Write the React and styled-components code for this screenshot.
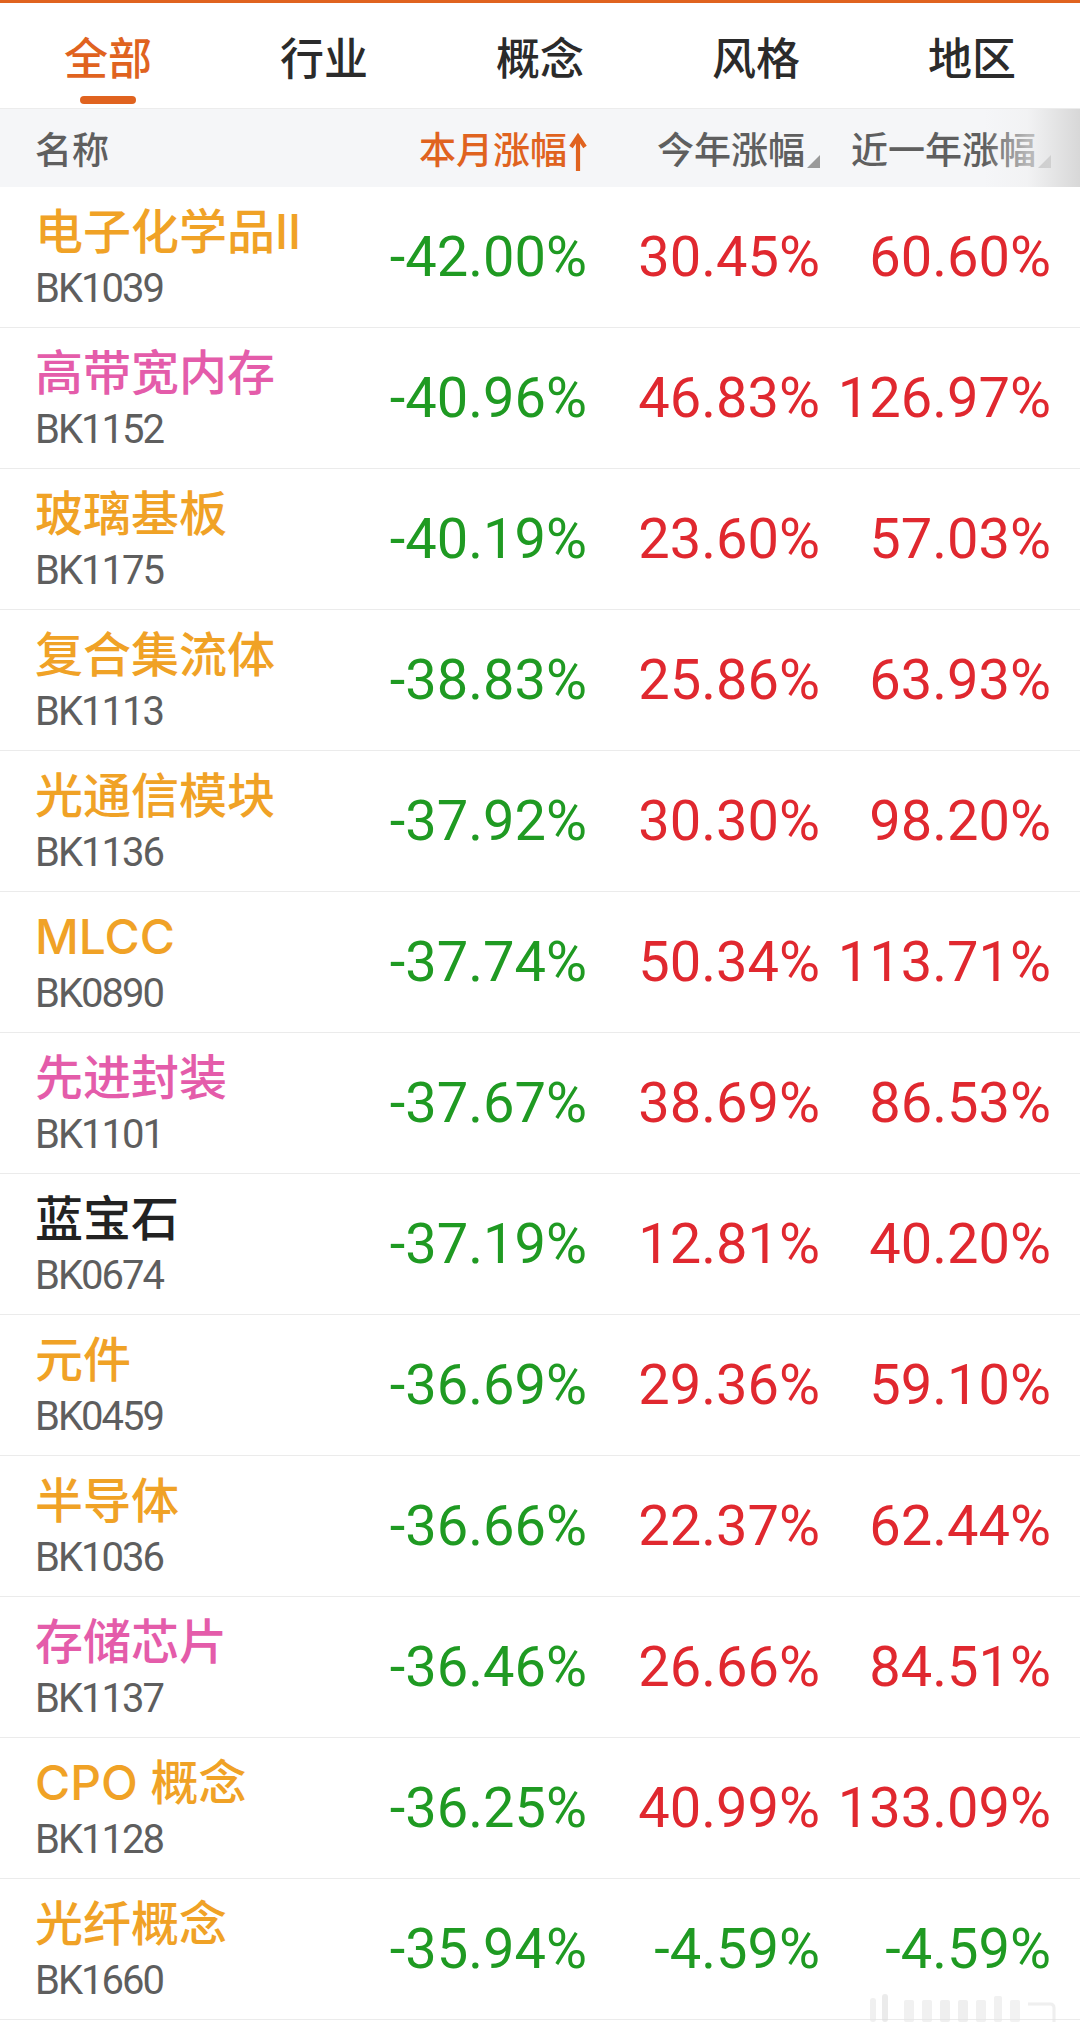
import React from 'react';
import styled, { createGlobalStyle } from 'styled-components';

const GlobalStyle = createGlobalStyle`
  body {
    margin: 0;
    background: #ffffff;
    font-family: "Noto Sans CJK SC", "Noto Sans", sans-serif;
  }
`;

const ORANGE = '#e0631f';
const GREEN = '#1f9a22';
const RED = '#e0282f';

const nameColors = {
  gold: '#f0a226',
  pink: '#e45caa',
  dark: '#222222',
};

const rows = [
  { name: '电子化学品II', code: 'BK1039', tone: 'gold', v: ['-42.00%', '30.45%', '60.60%'] },
  { name: '高带宽内存', code: 'BK1152', tone: 'pink', v: ['-40.96%', '46.83%', '126.97%'] },
  { name: '玻璃基板', code: 'BK1175', tone: 'gold', v: ['-40.19%', '23.60%', '57.03%'] },
  { name: '复合集流体', code: 'BK1113', tone: 'gold', v: ['-38.83%', '25.86%', '63.93%'] },
  { name: '光通信模块', code: 'BK1136', tone: 'gold', v: ['-37.92%', '30.30%', '98.20%'] },
  { name: 'MLCC', code: 'BK0890', tone: 'gold', v: ['-37.74%', '50.34%', '113.71%'] },
  { name: '先进封装', code: 'BK1101', tone: 'pink', v: ['-37.67%', '38.69%', '86.53%'] },
  { name: '蓝宝石', code: 'BK0674', tone: 'dark', v: ['-37.19%', '12.81%', '40.20%'] },
  { name: '元件', code: 'BK0459', tone: 'gold', v: ['-36.69%', '29.36%', '59.10%'] },
  { name: '半导体', code: 'BK1036', tone: 'gold', v: ['-36.66%', '22.37%', '62.44%'] },
  { name: '存储芯片', code: 'BK1137', tone: 'pink', v: ['-36.46%', '26.66%', '84.51%'] },
  { name: 'CPO 概念', code: 'BK1128', tone: 'gold', v: ['-36.25%', '40.99%', '133.09%'] },
  { name: '光纤概念', code: 'BK1660', tone: 'gold', v: ['-35.94%', '-4.59%', '-4.59%'] },
];

const tabs = ['全部', '行业', '概念', '风格', '地区'];

const Page = styled.div`
  position: relative;
  width: 1080px;
  min-height: 2036px;
  background: #fff;
`;

const TopLine = styled.div`
  height: 3px;
  background: ${ORANGE};
`;

const TabBar = styled.div`
  display: grid;
  grid-template-columns: repeat(5, 1fr);
  height: 105px;
`;

const Tab = styled.div`
  display: flex;
  flex-direction: column;
  align-items: center;
  padding-top: 27px;
`;

const TabLabel = styled.span`
  font-size: 44px;
  line-height: 52px;
  font-weight: 500;
  color: ${p => (p.$active ? ORANGE : '#2b2b2b')};
`;

const TabMark = styled.div`
  margin-top: 14px;
  width: 56px;
  height: 8px;
  border-radius: 4px;
  background: ${p => (p.$active ? ORANGE : 'transparent')};
`;

const Columns = styled.div`
  display: grid;
  grid-template-columns: 1fr 207px 233px 231px;
  padding: 0 29px 0 35px;
`;

const HeadRow = styled(Columns)`
  position: relative;
  height: 78px;
  align-items: center;
  background: #f5f6f8;
  border-top: 1px solid #ececec;

  &::after {
    content: '';
    position: absolute;
    top: 0;
    right: 0;
    width: 96px;
    height: 100%;
    background: linear-gradient(
      to right,
      rgba(245, 246, 248, 0) 0%,
      rgba(240, 240, 241, 0.6) 45%,
      rgba(214, 214, 214, 0.95) 100%
    );
  }
`;

const HeadCell = styled.div`
  display: flex;
  align-items: center;
  justify-content: ${p => (p.$left ? 'flex-start' : 'flex-end')};
  font-size: 37px;
  line-height: 44px;
  color: ${p => (p.$active ? ORANGE : '#5f5f5f')};
  font-weight: 500;
  white-space: nowrap;
`;

const Corner = styled.svg`
  width: 13px;
  height: 13px;
  margin-left: 2px;
  align-self: flex-end;
  margin-bottom: 2px;
  flex-shrink: 0;
`;

const Row = styled(Columns)`
  height: 140px;
  border-bottom: 1px solid #ebebeb;
  align-items: center;
`;

const NameCell = styled.div`
  display: flex;
  flex-direction: column;
  align-self: start;
  padding-top: 17px;
`;

const Name = styled.span`
  font-family: Inter, "Noto Sans CJK SC", sans-serif;
  font-size: 48px;
  line-height: 56px;
  font-weight: 500;
  color: ${p => nameColors[p.$tone]};
  white-space: nowrap;
`;

const Code = styled.span`
  margin-top: 6px;
  font-family: Roboto, "Noto Sans", sans-serif;
  font-size: 40px;
  line-height: 46px;
  letter-spacing: -2px;
  color: #5e5e5e;
`;

const Value = styled.span`
  text-align: right;
  white-space: nowrap;
  font-family: Roboto, "Noto Sans", sans-serif;
  font-size: 56px;
  line-height: 64px;
  color: ${p => (p.$down ? GREEN : RED)};
`;

const Watermark = styled.svg`
  position: absolute;
  right: 22px;
  bottom: 10px;
  width: 190px;
  height: 36px;
  opacity: 0.55;
`;

function SortArrow() {
  return (
    <svg width="18" height="40" viewBox="0 0 18 40" style={{ marginLeft: 2, marginTop: 10, flexShrink: 0 }}>
      <path d="M9 38 L9 5" stroke={ORANGE} strokeWidth="4.2" fill="none" />
      <path d="M2 14 L9 3.5 L16 14" stroke={ORANGE} strokeWidth="4.2" fill="none" strokeLinejoin="miter" />
    </svg>
  );
}

function SortCorner() {
  return (
    <Corner viewBox="0 0 13 13">
      <polygon points="13,0 13,13 0,13" fill="#9a9a9a" />
    </Corner>
  );
}

export default function App() {
  return (
    <Page>
      <GlobalStyle />
      <TopLine />
      <TabBar>
        {tabs.map((t, i) => (
          <Tab key={t}>
            <TabLabel $active={i === 0}>{t}</TabLabel>
            <TabMark $active={i === 0} />
          </Tab>
        ))}
      </TabBar>
      <HeadRow>
        <HeadCell $left>名称</HeadCell>
        <HeadCell $active>
          本月涨幅
          <SortArrow />
        </HeadCell>
        <HeadCell>
          今年涨幅
          <SortCorner />
        </HeadCell>
        <HeadCell>
          近一年涨幅
          <SortCorner />
        </HeadCell>
      </HeadRow>
      {rows.map(r => (
        <Row key={r.code}>
          <NameCell>
            <Name $tone={r.tone}>{r.name}</Name>
            <Code>{r.code}</Code>
          </NameCell>
          {r.v.map((val, i) => (
            <Value key={i} $down={val.startsWith('-')}>
              {val}
            </Value>
          ))}
        </Row>
      ))}
      <Watermark viewBox="0 0 190 36">
        <rect x="2" y="8" width="6" height="24" rx="3" fill="#e4e4e4" />
        <rect x="14" y="4" width="6" height="28" rx="3" fill="#dcdcdc" />
        <rect x="36" y="10" width="10" height="22" rx="2" fill="#e6e6e6" />
        <rect x="54" y="10" width="10" height="22" rx="2" fill="#e6e6e6" />
        <rect x="72" y="10" width="10" height="22" rx="2" fill="#e3e3e3" />
        <rect x="90" y="10" width="10" height="22" rx="2" fill="#e3e3e3" />
        <rect x="108" y="10" width="10" height="22" rx="2" fill="#e6e6e6" />
        <rect x="126" y="6" width="8" height="26" rx="2" fill="#e6e6e6" />
        <rect x="142" y="10" width="10" height="22" rx="2" fill="#e8e8e8" />
        <path d="M160 14 L182 14 Q186 14 186 18 L186 32" stroke="#e2e2e2" strokeWidth="3" fill="none" />
      </Watermark>
    </Page>
  );
}
